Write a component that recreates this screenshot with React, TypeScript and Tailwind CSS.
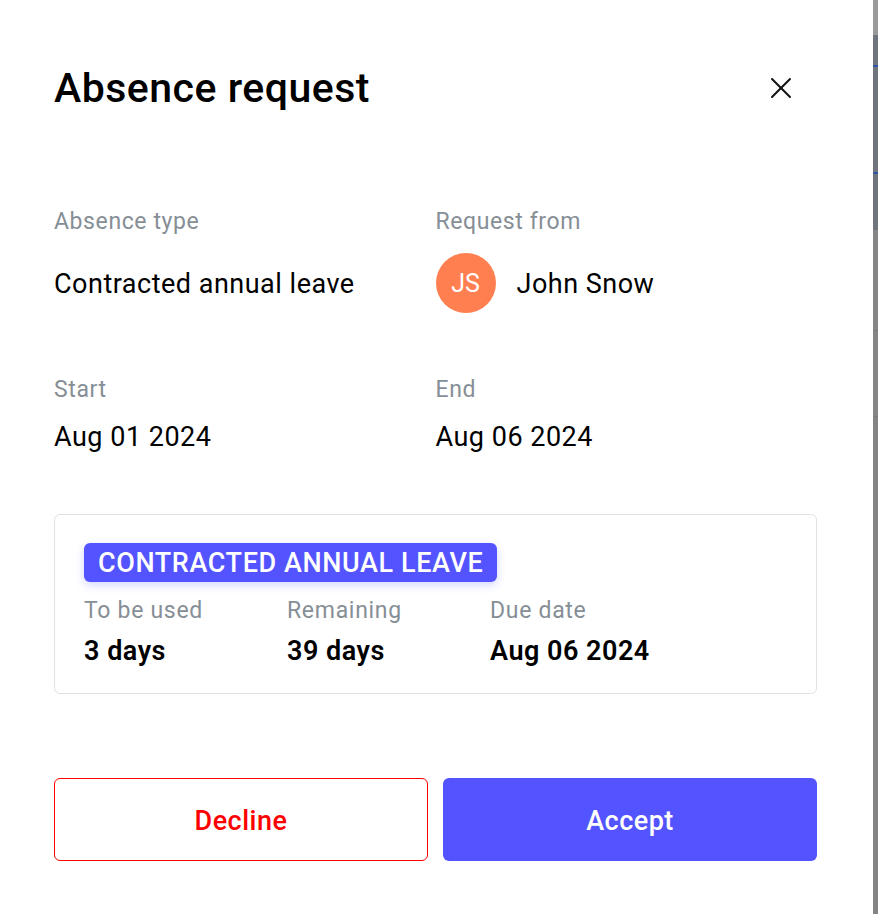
import React from "react";

type Stat = {
  label: string;
  value: string;
};

const stats: Stat[] = [
  { label: "To be used", value: "3 days" },
  { label: "Remaining", value: "39 days" },
  { label: "Due date", value: "Aug 06 2024" },
];

const Field = ({ label, children }: { label: string; children: React.ReactNode }) => (
  <div className="flex flex-col">
    <span className="text-[23px] leading-[28px] tracking-[0.6px] text-[#868e96]">{label}</span>
    {children}
  </div>
);

const CloseIcon = () => (
  <svg width="22" height="22" viewBox="0 0 22 22" fill="none" stroke="#111" strokeWidth="2" strokeLinecap="round">
    <path d="M2 2L20 20" />
    <path d="M20 2L2 20" />
  </svg>
);

const AbsenceRequest = () => {
  return (
    <div className="flex h-[914px] flex-1 flex-col bg-white pl-[54px] pr-[56px]">
      <div className="mt-[64px] flex h-[48px] items-center justify-between">
        <h1 className="text-[41px] font-medium leading-[48px] tracking-[0.5px] text-black">Absence request</h1>
        <button className="mr-[25px] flex h-[22px] w-[22px] items-center justify-center">
          <CloseIcon />
        </button>
      </div>

      <div className="mt-[96px] grid grid-cols-2">
        <Field label="Absence type">
          <div className="mt-[17px] flex h-[60px] items-center text-[27px] tracking-[0.5px] text-black">
            <span className="pt-[2px]">Contracted annual leave</span>
          </div>
        </Field>
        <Field label="Request from">
          <div className="mt-[17px] flex h-[60px] items-center gap-[21px]">
            <div className="flex h-[60px] w-[60px] items-center justify-center rounded-full bg-[#ff7f50] text-[25px] text-white">
              <span className="pt-[2px]">JS</span>
            </div>
            <span className="pt-[2px] text-[27px] tracking-[0.5px] text-black">John Snow</span>
          </div>
        </Field>
      </div>

      <div className="mt-[63px] grid grid-cols-2">
        <Field label="Start">
          <span className="mt-[17px] text-[27px] leading-[32px] tracking-[0.5px] text-black">Aug 01 2024</span>
        </Field>
        <Field label="End">
          <span className="mt-[17px] text-[27px] leading-[32px] tracking-[0.5px] text-black">Aug 06 2024</span>
        </Field>
      </div>

      <div className="mt-[61px] rounded-md border border-[#e2e2e2] pb-[26px] pl-[29px] pt-[28px]">
        <span className="inline-block rounded-md bg-[#5353ff] px-[14px] pt-[1px] text-[27px] font-medium leading-[38px] tracking-[0.6px] text-white shadow-[0_3px_8px_rgba(83,83,255,0.25)]">
          CONTRACTED ANNUAL LEAVE
        </span>
        <div className="mt-[15px] grid grid-cols-[203px_203px_1fr]">
          {stats.map((s) => (
            <div key={s.label} className="flex flex-col">
              <span className="text-[23px] leading-[28px] tracking-[0.7px] text-[#868e96]">{s.label}</span>
              <span className="mt-[10px] text-[27px] font-semibold leading-[32px] tracking-[0.5px] text-black">
                {s.value}
              </span>
            </div>
          ))}
        </div>
      </div>

      <div className="mt-[84px] grid grid-cols-2 gap-[15px]">
        <button className="h-[83px] rounded-md border border-[#ff0000] bg-white pt-[3px] text-[27px] font-medium tracking-[0.5px] text-[#ff0000]">
          Decline
        </button>
        <button className="h-[83px] rounded-md bg-[#5353ff] pt-[3px] text-[27px] font-medium tracking-[0.5px] text-white">
          Accept
        </button>
      </div>
    </div>
  );
};

export default function App() {
  return (
    <div className="flex h-[914px] w-[878px] overflow-hidden font-['Roboto',sans-serif]">
      <AbsenceRequest />
      {/* page behind the drawer */}
      <div className="flex w-[5px] flex-col">
        <div className="h-[35px] bg-[#9a9a9a]" />
        <div className="h-[30px] bg-[#70747c]" />
        <div className="h-[2px] bg-[#2f55a8]" />
        <div className="h-[105px] bg-[#70747c]" />
        <div className="h-[2px] bg-[#2f55a8]" />
        <div className="h-[56px] bg-[#70747c]" />
        <div className="h-[100px] bg-[#858585]" />
        <div className="h-[1px] bg-[#7a7a7a]" />
        <div className="h-[85px] bg-[#858585]" />
        <div className="h-[1px] bg-[#7a7a7a]" />
        <div className="flex-1 bg-[#838383]" />
      </div>
    </div>
  );
}
